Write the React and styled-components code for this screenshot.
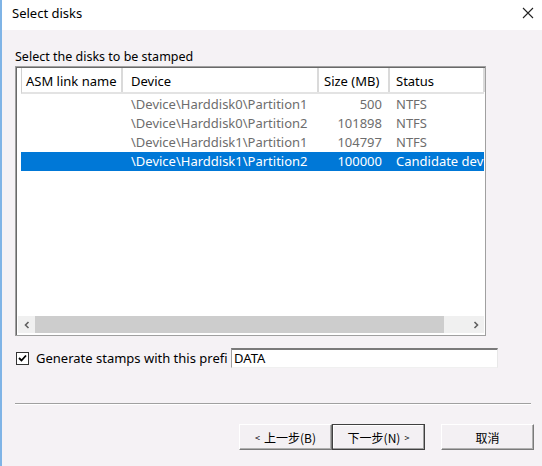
import React from "react";
import styled, { createGlobalStyle } from "styled-components";

const GlobalStyle = createGlobalStyle`
  html, body {
    margin: 0;
    padding: 0;
    background: #f5f2f5;
  }
  body {
    font-family: "Noto Sans", "Noto Sans CJK SC", sans-serif;
    font-size: 12px;
    color: #000;
  }
`;

const Window = styled.div`
  width: 542px;
  height: 466px;
  box-sizing: border-box;
  border-left: 2px solid #7fb4e6;
  background: #f5f2f5;
  display: flex;
  flex-direction: column;
  overflow: hidden;
`;

const TitleBar = styled.div`
  height: 30px;
  flex-shrink: 0;
  background: #fff;
  display: flex;
  align-items: center;
  justify-content: space-between;
  padding: 0 8px 4px 10px;
  box-sizing: border-box;
  font-size: 13px;
`;

const Body = styled.div`
  padding: 0 0 0 13px;
  display: flex;
  flex-direction: column;
`;

const Caption = styled.div`
  margin-top: 16px;
  height: 20px;
  line-height: 21px;
  font-size: 12.5px;
`;

const ListBox = styled.div`
  width: 471px;
  height: 270px;
  box-sizing: border-box;
  border: 1px solid #a0a0a0;
  box-shadow: inset 1px 1px 0 #696969;
  background: #fff;
  display: flex;
  flex-direction: column;
  padding: 1px 1px 2px 2px;
`;

const Grid = styled.div`
  flex: 1;
  padding-left: 3px;
  display: flex;
  flex-direction: column;
`;

const Header = styled.div`
  display: flex;
  height: 26px;
  border-bottom: 2px solid #e3e3e3;
  border-left: 1px solid #d0d0d0;
  box-sizing: border-box;
`;

const HeadCell = styled.div`
  width: ${(p) => p.w}px;
  flex-shrink: 0;
  box-sizing: border-box;
  border-right: 2px solid #dadada;
  padding: 0 ${(p) => p.pad}px;
  line-height: 26px;
  white-space: nowrap;
  overflow: hidden;
  font-size: 13px;
`;

const Rows = styled.div`
  padding-top: 1px;
  flex: 1;
`;

const Row = styled.div`
  display: flex;
  height: 19px;
  line-height: 19px;
  font-size: 13px;
  background: ${(p) => (p.selected ? "#0078d7" : "transparent")};
  color: ${(p) => (p.selected ? "#fff" : "#6d6d6d")};
`;

const Cell = styled.div`
  width: ${(p) => p.w}px;
  flex-shrink: 0;
  box-sizing: border-box;
  padding: 0 ${(p) => p.pad}px;
  text-align: ${(p) => (p.right ? "right" : "left")};
  white-space: nowrap;
  overflow: hidden;
`;

const ScrollBar = styled.div`
  height: 17px;
  background: #f0f0f0;
  display: flex;
  align-items: center;
`;

const Arrow = styled.div`
  width: 17px;
  height: 17px;
  display: flex;
  align-items: center;
  justify-content: center;
  flex-shrink: 0;
`;

const Thumb = styled.div`
  height: 17px;
  width: 409px;
  background: #cdcdcd;
`;

const Track = styled.div`
  flex: 1;
  display: flex;
`;

const PrefixRow = styled.div`
  margin-top: 12px;
  display: flex;
  align-items: center;
  height: 20px;
`;

const CheckBox = styled.div`
  width: 11px;
  height: 11px;
  border: 1px solid #333;
  background: #fff;
  display: flex;
  align-items: center;
  justify-content: center;
  margin: 0 7px 0 1px;
  flex-shrink: 0;
`;

const Label = styled.div`
  width: 195px;
  flex-shrink: 0;
  overflow: hidden;
  white-space: nowrap;
  font-size: 13px;
`;

const Input = styled.div`
  width: 267px;
  height: 20px;
  box-sizing: border-box;
  background: #fff;
  border-top: 2px solid #7a7a7a;
  border-left: 1px solid #a0a0a0;
  border-right: 1px solid #e8e8e8;
  border-bottom: 1px solid #f0f0f0;
  padding-left: 2px;
  line-height: 17px;
  font-size: 13px;
`;

const Separator = styled.div`
  margin-top: 35px;
  width: 516px;
  height: 1px;
  background: #a0a0a0;
  border-bottom: 1px solid #fff;
`;

const Buttons = styled.div`
  margin-top: 19px;
  display: flex;
  justify-content: flex-end;
  padding-right: 8px;
`;

const Button = styled.div`
  width: 93px;
  height: 26px;
  box-sizing: border-box;
  background: #f3f0f3;
  border: 1px solid;
  border-color: ${(p) =>
    p.primary ? "#404040 #404040 #404040 #404040" : "#fff #7a7a7a #7a7a7a #fff"};
  box-shadow: ${(p) =>
    p.primary ? "inset -1px -1px 0 #a0a0a0, inset 1px 1px 0 #fff" : "inset -1px -1px 0 #b0b0b0"};
  margin-left: ${(p) => p.gap || 0}px;
  display: flex;
  align-items: center;
  justify-content: center;
  font-family: "Noto Sans CJK SC", sans-serif;
  font-size: 12px;
  gap: 4px;
`;

const Small = styled.span`
  font-size: 9px;
`;

const cols = [101, 196, 71, 95];

const disks = [
  { dev: "\\Device\\Harddisk0\\Partition1", size: "500", status: "NTFS" },
  { dev: "\\Device\\Harddisk0\\Partition2", size: "101898", status: "NTFS" },
  { dev: "\\Device\\Harddisk1\\Partition1", size: "104797", status: "NTFS" },
  { dev: "\\Device\\Harddisk1\\Partition2", size: "100000", status: "Candidate device", selected: true },
];

export default function App() {
  return (
    <>
      <GlobalStyle />
      <Window>
        <TitleBar>
          <span>Select disks</span>
          <svg width="12" height="12" viewBox="0 0 12 12">
            <path d="M1 1 L11 11 M11 1 L1 11" stroke="#222" strokeWidth="1.1" />
          </svg>
        </TitleBar>
        <Body>
          <Caption>Select the disks to be stamped</Caption>
          <ListBox>
            <Grid>
              <Header>
                <HeadCell w={cols[0]} pad={4}>ASM link name</HeadCell>
                <HeadCell w={cols[1]} pad={8}>Device</HeadCell>
                <HeadCell w={cols[2]} pad={5}>Size (MB)</HeadCell>
                <HeadCell w={cols[3]} pad={6}>Status</HeadCell>
              </Header>
              <Rows>
                {disks.map((d) => (
                  <Row key={d.dev} selected={d.selected}>
                    <Cell w={cols[0]} pad={4} />
                    <Cell w={cols[1]} pad={9}>{d.dev}</Cell>
                    <Cell w={cols[2]} pad={7} right>{d.size}</Cell>
                    <Cell w={cols[3]} pad={7}>{d.status}</Cell>
                  </Row>
                ))}
              </Rows>
            </Grid>
            <ScrollBar>
              <Arrow>
                <svg width="8" height="8" viewBox="0 0 8 8">
                  <path d="M5.5 1 L2.5 4 L5.5 7" stroke="#606060" strokeWidth="1.6" fill="none" />
                </svg>
              </Arrow>
              <Track>
                <Thumb />
              </Track>
              <Arrow>
                <svg width="8" height="8" viewBox="0 0 8 8">
                  <path d="M2.5 1 L5.5 4 L2.5 7" stroke="#606060" strokeWidth="1.6" fill="none" />
                </svg>
              </Arrow>
            </ScrollBar>
          </ListBox>
          <PrefixRow>
            <CheckBox>
              <svg width="9" height="9" viewBox="0 0 9 9">
                <path d="M1 4 L3.5 6.5 L8 1.5" stroke="#000" strokeWidth="1.8" fill="none" />
              </svg>
            </CheckBox>
            <Label>Generate stamps with this prefi</Label>
            <Input>DATA</Input>
          </PrefixRow>
          <Separator />
          <Buttons>
            <Button>
              <Small>&lt;</Small>上一步(B)
            </Button>
            <Button primary>
              下一步(N)<Small>&gt;</Small>
            </Button>
            <Button gap={16}>取消</Button>
          </Buttons>
        </Body>
      </Window>
    </>
  );
}
